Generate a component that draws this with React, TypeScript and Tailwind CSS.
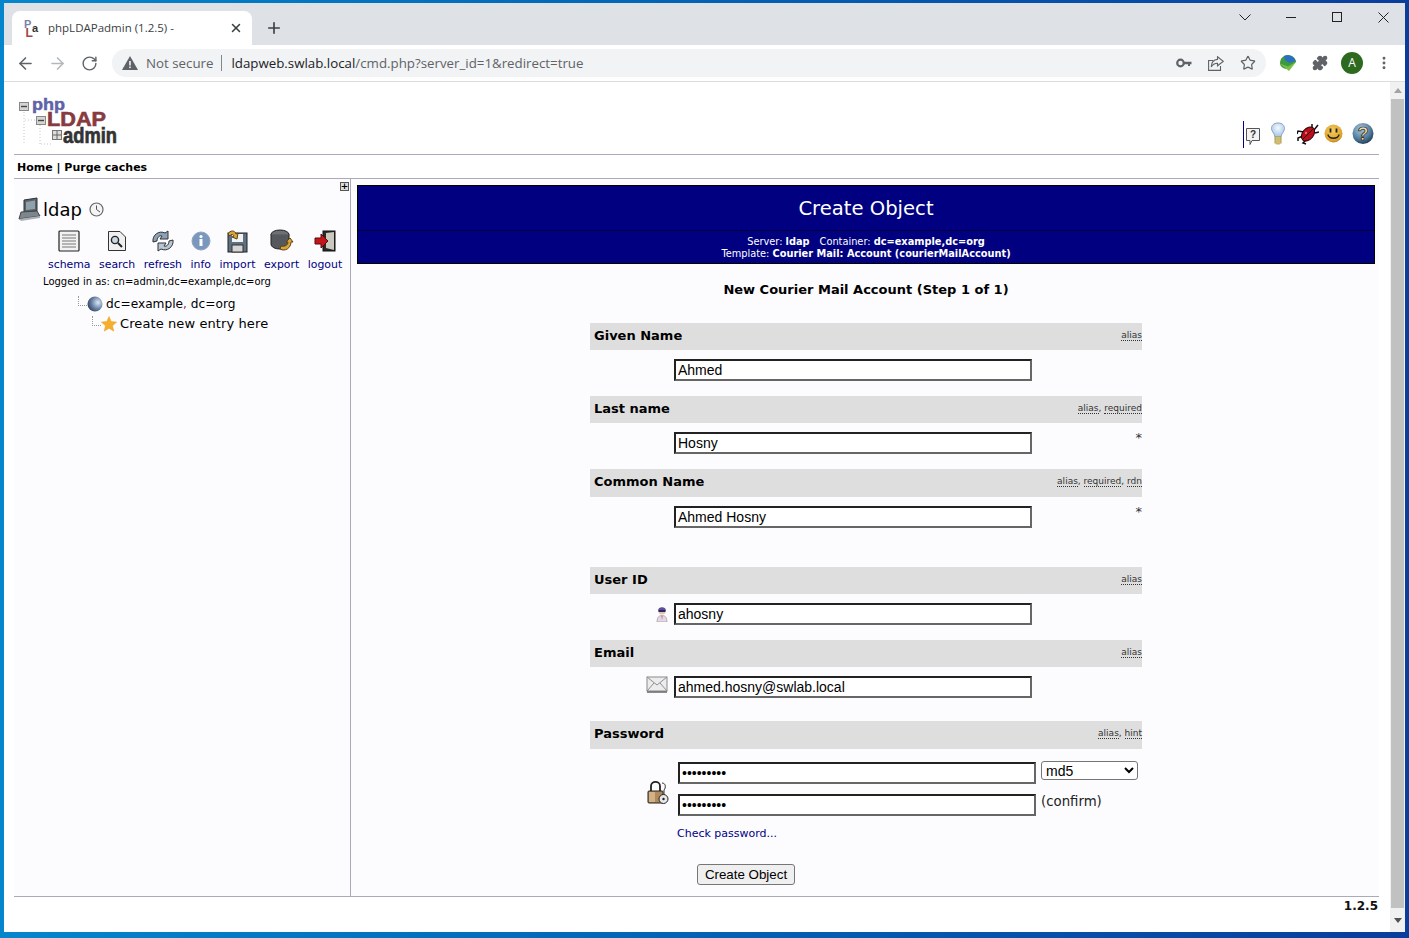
import { ArrowLeft, ArrowRight, MoreVertical, Plus, Puzzle, RotateCw, Star, X } from "lucide-react";
import type { ReactNode } from "react";

const Logo = () => (
  <svg width="104" height="52" viewBox="0 0 104 52" className="block overflow-visible">
    <path d="M7 14V46M23 27V46M8 22H19M24 46H36" stroke="#c4c4c4" strokeDasharray="1 2" fill="none" />
    <rect x="2.5" y="4.5" width="9" height="8" fill="#d4d4d4" stroke="#888" />
    <path d="M4 8.5H10" stroke="#444" strokeWidth="1.4" />
    <text x="15" y="12" fontFamily="Liberation Sans" fontWeight="700" fontSize="17" fill="#5f62a8" stroke="#5f62a8" strokeWidth="0.5" textLength="33" lengthAdjust="spacingAndGlyphs">php</text>
    <rect x="19.5" y="18.5" width="9" height="8" fill="#d4d4d4" stroke="#888" />
    <path d="M21 22.5H27" stroke="#444" strokeWidth="1.4" />
    <text x="30" y="28" fontFamily="Liberation Sans" fontWeight="700" fontSize="20" fill="#873a40" stroke="#873a40" strokeWidth="0.6" textLength="59" lengthAdjust="spacingAndGlyphs">LDAP</text>
    <rect x="35.5" y="32.5" width="9" height="9" fill="#ddd" stroke="#777" />
    <path d="M40 33V41M36 37H44" stroke="#666" />
    <text x="46" y="45" fontFamily="Liberation Sans" fontWeight="700" fontSize="22" fill="#333" stroke="#333" strokeWidth="0.7" textLength="54" lengthAdjust="spacingAndGlyphs">admin</text>
  </svg>
);

const Favicon = () => (
  <svg width="16" height="18" viewBox="0 0 16 18" className="overflow-visible">
    <text x="0" y="9" fontFamily="Liberation Sans" fontWeight="700" fontSize="11" fill="#7d7fae">P</text>
    <text x="1.5" y="17.5" fontFamily="Liberation Sans" fontWeight="700" fontSize="12" fill="#9c4a4a">L</text>
    <text x="8" y="13" fontFamily="Liberation Sans" fontWeight="700" fontSize="11" fill="#333">a</text>
  </svg>
);

const HelpBubble = () => (
  <svg width="16" height="20" viewBox="0 0 16 20">
    <path d="M1.5 1.5H14.5V13.5H7L5 17.5V13.5H1.5Z" fill="#f4f4f4" stroke="#555" />
    <text x="8" y="11" textAnchor="middle" fontFamily="Liberation Sans" fontWeight="700" fontSize="10" fill="#333">?</text>
  </svg>
);

const Bulb = () => (
  <svg width="16" height="23" viewBox="0 0 16 23">
    <defs>
      <radialGradient id="bulb" cx="0.5" cy="0.35" r="0.7">
        <stop offset="0" stopColor="#f4f9ff" />
        <stop offset="1" stopColor="#9dc0e4" />
      </radialGradient>
    </defs>
    <path d="M8 1C3.5 1 1.5 3.5 1.5 6.5C1.5 9.5 4.5 11 5 15H11C11.5 11 14.5 9.5 14.5 6.5C14.5 3.5 12.5 1 8 1Z" fill="url(#bulb)" stroke="#8aa4c4" />
    <rect x="5" y="15" width="6" height="6" fill="#efe09a" stroke="#b09a4c" />
    <path d="M5 17H11M5 19H11" stroke="#b09a4c" />
    <path d="M6 21H10V22.5H6Z" fill="#c8b568" />
  </svg>
);

const Bug = () => (
  <svg width="22" height="22" viewBox="0 0 22 22">
    <path d="M7 9L1 8L0 11M6 13L1 15L1 18M9 17L6 20L9 21M15 5L15 1M17 7L21 2M18 10L22 9" stroke="#111" strokeWidth="1.5" fill="none" />
    <ellipse cx="11" cy="11" rx="5.5" ry="8" transform="rotate(40 11 11)" fill="#b80f1c" stroke="#300" />
    <path d="M6 16L16 6" stroke="#300" />
    <circle cx="9" cy="10" r="1.2" fill="#e66" />
  </svg>
);

const Smile = () => (
  <svg width="19" height="20" viewBox="0 0 19 20">
    <defs>
      <radialGradient id="smile" cx="0.45" cy="0.35" r="0.75">
        <stop offset="0" stopColor="#f4cc5c" />
        <stop offset="0.75" stopColor="#dca02a" />
        <stop offset="1" stopColor="#7d5a14" />
      </radialGradient>
    </defs>
    <circle cx="9.5" cy="9.5" r="9" fill="url(#smile)" />
    <path d="M6.5 4.5V8.5M12.5 4.5V8.5" stroke="#222" strokeWidth="1.8" />
    <path d="M3.8 10.5C5.5 15.5 13.5 15.5 15.2 10.5" stroke="#222" strokeWidth="1.3" fill="none" />
  </svg>
);

const HelpCircle = () => (
  <svg width="22" height="23" viewBox="0 0 22 23">
    <defs>
      <radialGradient id="help" cx="0.4" cy="0.3" r="0.8">
        <stop offset="0" stopColor="#a9c8e0" />
        <stop offset="0.6" stopColor="#4f7a9c" />
        <stop offset="1" stopColor="#14283c" />
      </radialGradient>
    </defs>
    <circle cx="11" cy="11.5" r="10.5" fill="url(#help)" />
    <text x="11" y="18" textAnchor="middle" fontFamily="Liberation Sans" fontWeight="700" fontSize="18" fill="#f6e6a8" stroke="#222" strokeWidth="0.7">?</text>
  </svg>
);

const ServerIcon = () => (
  <svg width="24" height="24" viewBox="0 0 24 24">
    <path d="M6 3L19 1V14L6 15Z" fill="#59636b" stroke="#333" />
    <path d="M8 5L17 3.5V12L8 13Z" fill="#8fa1ad" />
    <path d="M3 15L19 14L22 19L1 22Z" fill="#7c868d" stroke="#444" />
    <path d="M1 22L22 19V21L3 24Z" fill="#aab2b8" />
  </svg>
);

const Clock = () => (
  <svg width="15" height="15" viewBox="0 0 15 15">
    <circle cx="7.5" cy="7.5" r="6.5" fill="#f4f4f4" stroke="#666" strokeWidth="1.2" />
    <path d="M7.5 3.5V7.5L11 10" stroke="#555" fill="none" />
  </svg>
);

const SchemaIcon = () => (
  <svg width="22" height="22" viewBox="0 0 22 22">
    <rect x="1" y="1" width="20" height="20" rx="1" fill="#f2f2f2" stroke="#222" strokeWidth="1.2" />
    <path d="M4 5H18M4 8H18M4 11H18M4 14H18M4 17H18" stroke="#777" />
  </svg>
);

const SearchIcon = () => (
  <svg width="20" height="22" viewBox="0 0 20 22">
    <path d="M1.5 1.5H13L18.5 7V20.5H1.5Z" fill="#f0f0f0" stroke="#333" />
    <circle cx="8" cy="10" r="3.6" fill="#cdd7e2" stroke="#222" strokeWidth="1.4" />
    <path d="M11 13L15 17" stroke="#222" strokeWidth="2" />
  </svg>
);

const RefreshIcon = () => (
  <svg width="22" height="22" viewBox="0 0 22 22">
    <path d="M1 12C0 5 7 0 13 3L16 1V9H8L10 6C7 5 5 8 5 11Z" fill="#8ba3ba" stroke="#333" />
    <path d="M21 10C22 17 15 22 9 19L6 21V13H14L12 16C15 17 17 14 17 11Z" fill="#b7c6d4" stroke="#333" />
  </svg>
);

const InfoIcon = () => (
  <svg width="20" height="20" viewBox="0 0 20 20">
    <circle cx="10" cy="10" r="9" fill="#7a97bd" stroke="#8fa3bd" />
    <rect x="8.5" y="8" width="3" height="7" fill="#fff" />
    <circle cx="10" cy="5.5" r="1.6" fill="#fff" />
  </svg>
);

const ImportIcon = () => (
  <svg width="22" height="24" viewBox="0 0 22 24">
    <rect x="2" y="4" width="19" height="19" fill="#5d7182" stroke="#222" />
    <rect x="6" y="5" width="11" height="8" fill="#f2f2f2" />
    <rect x="6" y="16" width="11" height="7" fill="#d5d5d5" stroke="#333" />
    <path d="M2 5C4 1 9 1 10 5L12 4L11 10L6 8L8 7C7 5 5 5 4 7Z" fill="#d9a53a" stroke="#5e4210" />
  </svg>
);

const ExportIcon = () => (
  <svg width="24" height="24" viewBox="0 0 24 24">
    <ellipse cx="10" cy="5.5" rx="9" ry="4.5" fill="#6c6f73" stroke="#222" />
    <path d="M1 5.5V15C1 18 5 20 10 20C15 20 19 18 19 15V5.5" fill="#55585c" stroke="#222" />
    <path d="M11 17C15 18 18 16 18 13L16 13L20 9L23 13L21 13C21 19 15 23 10 20Z" fill="#d9a53a" stroke="#5e4210" />
  </svg>
);

const LogoutIcon = () => (
  <svg width="22" height="22" viewBox="0 0 22 22">
    <rect x="9" y="1" width="12" height="20" fill="#2a2a28" stroke="#111" />
    <path d="M12 3L20 2V20L12 18Z" fill="#c9c9bd" />
    <path d="M1 8H7V4L14 11L7 18V14H1Z" fill="#c3161c" stroke="#5a0a0a" />
  </svg>
);

const GlobeIcon = () => (
  <svg width="16" height="16" viewBox="0 0 16 16">
    <defs>
      <radialGradient id="globe" cx="0.7" cy="0.4" r="0.8">
        <stop offset="0" stopColor="#dfe8f2" />
        <stop offset="0.5" stopColor="#6d87aa" />
        <stop offset="1" stopColor="#26344c" />
      </radialGradient>
    </defs>
    <circle cx="8" cy="8" r="7.5" fill="url(#globe)" />
  </svg>
);

const StarIcon = () => (
  <svg width="16" height="16" viewBox="0 0 16 16">
    <path d="M8 0.5L10.2 5.6L15.6 6.1L11.5 9.7L12.8 15.2L8 12.2L3.2 15.2L4.5 9.7L0.4 6.1L5.8 5.6Z" fill="#f6ae2d" stroke="#e8a020" strokeWidth="0.5" />
  </svg>
);

const UserIcon = () => (
  <svg width="12" height="16" viewBox="0 0 12 16">
    <path d="M1 16C1 11 3 9.5 6 9.5C9 9.5 11 11 11 16Z" fill="#e6d6de" stroke="#9a8aa0" strokeWidth="0.6" />
    <path d="M5 10L6 14L7 10Z" fill="#b09ac0" />
    <circle cx="6" cy="5" r="3.6" fill="#e5c4b0" />
    <path d="M2 4.5C2 0 10 0 10 4.5Z" fill="#5a4f9c" />
    <path d="M2.5 4H9.5V6H2.5Z" fill="#2f2760" />
  </svg>
);

const MailIcon = () => (
  <svg width="22" height="17" viewBox="0 0 22 17">
    <rect x="1" y="1" width="20" height="14" fill="#ececec" stroke="#8a8a8a" />
    <path d="M1 1L11 9L21 1M1 15L8 7M21 15L14 7" stroke="#8f8f8f" fill="none" />
    <path d="M1 16H21" stroke="#666" strokeWidth="1.5" />
  </svg>
);

const LockIcon = () => (
  <svg width="22" height="25" viewBox="0 0 22 25">
    <path d="M4 11V6C4 0.5 13 0.5 13 6V11" fill="none" stroke="#222" strokeWidth="1.8" />
    <rect x="1" y="11" width="15" height="12" rx="1" fill="#b08a5a" stroke="#222" />
    <path d="M2 12H8V22H2Z" fill="#d2b184" />
    <circle cx="16.5" cy="19" r="4.5" fill="#e8e8e8" stroke="#222" />
    <circle cx="16.5" cy="19" r="1.2" fill="#222" />
    <path d="M15 3C19 3 19 8 17 10V14.5" stroke="#333" fill="none" />
  </svg>
);

const WarningIcon = () => (
  <svg width="16" height="14" viewBox="0 0 16 14">
    <path d="M8 0L16 14H0Z" fill="#5f6368" />
    <rect x="7.2" y="5" width="1.6" height="4.5" fill="#f1f3f4" />
    <rect x="7.2" y="10.5" width="1.6" height="1.6" fill="#f1f3f4" />
  </svg>
);

const KeyIcon = () => (
  <svg width="16" height="10" viewBox="0 0 16 10">
    <circle cx="4.5" cy="5" r="3.3" fill="none" stroke="#5f6368" strokeWidth="2.2" />
    <path d="M8 3.8H15.5V6.2H14V8H12V6.2H8Z" fill="#5f6368" />
  </svg>
);

const ShareIcon = () => (
  <svg width="16" height="15" viewBox="0 0 16 15" fill="none" stroke="#5f6368" strokeWidth="1.1">
    <path d="M5 4.5H0.6V14.4H12.5V10" />
    <path d="M9.5 0.8L15.2 5.4L9.5 9.8V7.2C6.5 7.2 4.6 8.4 3.2 11C3.4 7 5.6 3.6 9.5 3.4Z" />
  </svg>
);

const ExtensionIcon = () => (
  <svg width="18" height="18" viewBox="0 0 18 18">
    <path d="M1 9C1 4 5 1 9 1C14 1 17 5 17 8L9 15C5 15 1 13 1 9Z" fill="#3f9a3f" />
    <path d="M5 2C9 0 15 2 16.5 7L10 9L6 6Z" fill="#2a6fc4" />
    <path d="M0.5 9.5L9 12.5L17 8L10 17Z" fill="#78c043" />
  </svg>
);

const WindowControls = () => (
  <div className="flex items-center h-[28px] self-start mr-[-1px] text-[#222]">
    <div className="w-[46px] flex justify-center">
      <svg width="12" height="7" viewBox="0 0 12 7" fill="none" stroke="currentColor">
        <path d="M0.5 0.5L6 6L11.5 0.5" />
      </svg>
    </div>
    <div className="w-[46px] flex justify-center">
      <div className="w-[10px] h-px bg-[#222]" />
    </div>
    <div className="w-[46px] flex justify-center">
      <div className="w-[10px] h-[10px] border border-[#222]" />
    </div>
    <div className="w-[46px] flex justify-center">
      <svg width="11" height="11" viewBox="0 0 11 11" fill="none" stroke="currentColor">
        <path d="M0.5 0.5L10.5 10.5M10.5 0.5L0.5 10.5" />
      </svg>
    </div>
  </div>
);

const tabs = [
  { name: "schema", icon: <SchemaIcon /> },
  { name: "search", icon: <SearchIcon /> },
  { name: "refresh", icon: <RefreshIcon /> },
  { name: "info", icon: <InfoIcon /> },
  { name: "import", icon: <ImportIcon /> },
  { name: "export", icon: <ExportIcon /> },
  { name: "logout", icon: <LogoutIcon /> },
];

const TextBox = ({ value, type = "text" }: { value: string; type?: string }) => (
  <input
    type={type}
    defaultValue={value}
    className="w-[358px] h-[22px] px-[2px] bg-white border-2 border-t-[#222] border-l-[#222] border-b-[#666] border-r-[#666] text-[14px] text-black font-['Liberation_Sans',sans-serif] outline-none"
  />
);

const Tags = ({ items }: { items: string[] }) => (
  <span className="text-[9px] text-[#333]">
    {items.map((t, i) => (
      <span key={t}>
        {i > 0 && ", "}
        <span className="border-b border-dotted border-[#333]">{t}</span>
      </span>
    ))}
  </span>
);

const FieldHeader = ({ label, tags, className }: { label: string; tags: string[]; className: string }) => (
  <div className={`flex items-center justify-between h-[27px] pl-1 pb-[2px] bg-[#dedede] ${className}`}>
    <span className="text-[13px] font-bold text-black">{label}</span>
    <Tags items={tags} />
  </div>
);

const Field = ({
  label,
  tags,
  value,
  icon,
  required,
  className = "mt-[15px]",
}: {
  label: string;
  tags: string[];
  value: string;
  icon?: ReactNode;
  required?: boolean;
  className?: string;
}) => (
  <>
    <FieldHeader label={label} tags={tags} className={className} />
    <div className="grid grid-cols-[84px_358px_1fr] mt-[9px] h-[22px]">
      <div className="flex items-center justify-end pr-[6px]">{icon}</div>
      <TextBox value={value} />
      <div className="text-right text-[13px] leading-[11px] text-[#333]">{required && "*"}</div>
    </div>
  </>
);

const BrowserChrome = () => (
  <>
    {/* tab strip */}
    <div className="h-[42px] bg-[#dee1e6] flex items-end pl-2 shrink-0">
      <div className="w-[240px] h-[34px] bg-white rounded-t-lg flex items-center pl-3 pr-[9px]">
        <Favicon />
        <span className="ml-[8px] flex-1 text-[11.5px] text-[#3c4043] font-['Open_Sans',sans-serif]">phpLDAPadmin (1.2.5) -</span>
        <X size={14} strokeWidth={2.6} className="text-[#3c4043]" />
      </div>
      <Plus size={18} strokeWidth={2.2} className="ml-[13px] mb-[8px] text-[#3c4043]" />
      <div className="flex-1" />
      <WindowControls />
    </div>
    {/* toolbar */}
    <div className="h-[37px] bg-white border-b border-[#dadce0] flex items-center shrink-0 text-[#5f6368]">
      <ArrowLeft size={19} strokeWidth={2} className="ml-[12px]" />
      <ArrowRight size={19} strokeWidth={2} className="ml-[13px] text-[#b4b7bb]" />
      <RotateCw size={17} strokeWidth={2} className="ml-[14px]" />
      <div className="ml-[14px] w-[1154px] h-[28px] rounded-full bg-[#f1f3f4] flex items-center pl-[10px] pr-[10px] font-['Open_Sans',sans-serif] text-[13.3px]">
        <WarningIcon />
        <span className="ml-[8px] pt-[2px] text-[#5f6368]">Not secure</span>
        <span className="ml-[8px] w-px h-[16px] bg-[#80868b]" />
        <span className="ml-[9px] pt-[2px] text-[#202124]">ldapweb.swlab.local</span>
        <span className="pt-[2px] text-[#5f6368]">/cmd.php?server_id=1&amp;redirect=true</span>
        <div className="flex-1" />
        <KeyIcon />
        <span className="ml-[16px]">
          <ShareIcon />
        </span>
        <Star size={16} strokeWidth={1.8} className="ml-[16px]" />
      </div>
      <div className="ml-[13px]">
        <ExtensionIcon />
      </div>
      <Puzzle size={16} strokeWidth={2} fill="#5f6368" className="ml-[15px]" />
      <div className="ml-[13px] w-[22px] h-[22px] rounded-full bg-[#2d6a1f] text-white text-[12px] flex items-center justify-center font-['Open_Sans',sans-serif]">
        A
      </div>
      <MoreVertical size={16} strokeWidth={2.4} className="ml-[13px]" />
    </div>
  </>
);

const Sidebar = () => (
  <aside className="w-[337px] shrink-0 border-r border-[#aaaaba] bg-[#fcfcff] relative pt-[18px] pl-1">
    <div className="absolute top-[3px] right-[1px] w-[9px] h-[9px] border border-[#555] bg-[#ddd] flex items-center justify-center text-[9px] leading-none font-bold text-black">
      +
    </div>
    <div className="flex items-center h-[24px]">
      <ServerIcon />
      <span className="ml-[1px] text-[18px] text-black">ldap</span>
      <span className="ml-[7px]">
        <Clock />
      </span>
    </div>
    <div className="flex gap-[8.5px] ml-[30px] mt-[9px]">
      {tabs.map((t) => (
        <div key={t.name} className="flex flex-col items-center">
          <div className="h-[22px] flex items-center">{t.icon}</div>
          <span className="mt-[5px] text-[10.9px] leading-[16px] text-[#000080]">{t.name}</span>
        </div>
      ))}
    </div>
    <div className="ml-[25px] mt-[1px] text-[10px] leading-[16px] text-black">Logged in as: cn=admin,dc=example,dc=org</div>
    <div className="ml-[58px] mt-[4px] flex items-center h-[20px]">
      <span className="w-[9px] h-[10px] border-l border-b border-dotted border-[#999] mb-[6px] ml-[2px]" />
      <GlobeIcon />
      <span className="ml-[3px] text-[12.2px] text-black">
        dc=example<span className="text-[#a33]">,</span> dc=org
      </span>
    </div>
    <div className="ml-[74px] flex items-center h-[20px]">
      <span className="w-[9px] h-[10px] border-l border-b border-dotted border-[#999] mb-[6px]" />
      <StarIcon />
      <span className="ml-[3px] text-[13px] tracking-[0.1px] text-black">Create new entry here</span>
    </div>
  </aside>
);

const CreateForm = () => (
  <main className="flex-1 bg-[#fcfcff] flex flex-col pl-[6px] pr-[4px] pt-[6px]">
    <div className="border border-black bg-[#000080] text-white text-center">
      <div className="h-[45px] flex items-center justify-center border-b border-[#00003c] pt-[2px] text-[19.6px]">Create Object</div>
      <div className="h-[32px] flex flex-col justify-center pt-[2px] text-[9.8px] leading-[12px]">
        <div>
          Server: <b>ldap</b>
          <span className="ml-[10px]">Container: </span>
          <b>dc=example,dc=org</b>
        </div>
        <div>
          Template: <b>Courier Mail: Account (courierMailAccount)</b>
        </div>
      </div>
    </div>
    <div className="mt-[17px] text-center text-[13px] leading-[17px] font-bold text-black">New Courier Mail Account (Step 1 of 1)</div>
    <div className="w-[552px] ml-[233px]">
      <Field label="Given Name" tags={["alias"]} value="Ahmed" className="mt-[25px]" />
      <Field label="Last name" tags={["alias", "required"]} value="Hosny" required />
      <Field label="Common Name" tags={["alias", "required", "rdn"]} value="Ahmed Hosny" required className="mt-[15px] h-[28px]" />
      <Field label="User ID" tags={["alias"]} value="ahosny" icon={<UserIcon />} className="mt-[39px]" />
      <Field label="Email" tags={["alias"]} value="ahmed.hosny@swlab.local" icon={<span className="mb-[8px]"><MailIcon /></span>} />
      <FieldHeader label="Password" tags={["alias", "hint"]} className="mt-[23px] h-[28px]" />
      <div className="mt-[13px] flex">
        <div className="w-[88px] flex items-center justify-end pr-[9px] pt-[6px]">
          <LockIcon />
        </div>
        <div className="flex flex-col gap-[10px]">
          <TextBox value="123456789" type="password" />
          <TextBox value="123456789" type="password" />
        </div>
        <div className="ml-[5px] flex flex-col">
          <select className="w-[97px] h-[19px] mt-[-1px] bg-white border border-[#767676] rounded-[3px] text-[14px] leading-none text-black font-['Liberation_Sans',sans-serif]">
            <option>md5</option>
          </select>
          <span className="mt-[13px] text-[13.3px] leading-[18px] text-[#222]">(confirm)</span>
        </div>
      </div>
      <div className="ml-[87px] mt-[10px] text-[11px] leading-[15px] text-[#000080]">Check password...</div>
      <button className="block ml-[107px] mt-[23px] w-[98px] h-[21px] bg-[#efefef] border border-[#767676] rounded-[3px] text-[13.33px] leading-none text-black font-['Liberation_Sans',sans-serif]">
        Create Object
      </button>
    </div>
  </main>
);

const Scrollbar = () => (
  <div className="w-[15px] bg-[#f1f1f1] flex flex-col items-center shrink-0">
    <div className="h-[17px] flex items-center justify-center">
      <div className="w-0 h-0 border-x-[4px] border-x-transparent border-b-[5px] border-b-[#a3a3a3]" />
    </div>
    <div className="w-[13px] flex-1 bg-[#c1c1c1]" />
    <div className="h-[24px] flex items-center justify-center">
      <div className="w-0 h-0 border-x-[4px] border-x-transparent border-t-[5px] border-t-[#505050]" />
    </div>
  </div>
);

export default function App() {
  return (
    <div className="w-[1409px] h-[938px] overflow-hidden bg-gradient-to-r from-[#0586cc] to-[#0a3d9c] pt-[3px] pl-[4px] pr-[4px] pb-[6px] flex flex-col font-['DejaVu_Sans',sans-serif]">
      <BrowserChrome />
      <div className="flex-1 min-h-0 flex bg-white">
        <div className="flex-1 min-w-0 flex flex-col pl-[10px] pr-[11px]">
          {/* page header */}
          <header className="h-[73px] shrink-0 flex items-end justify-between border-b border-[#aaaaba]">
            <div className="ml-[3px] mb-[4px]">
              <Logo />
            </div>
            <div className="flex h-[27px] mb-[6px] pr-[5px]">
              <div className="w-px h-[27px] bg-[#000080]" />
              <div className="ml-px mt-[6px]">
                <HelpBubble />
              </div>
              <div className="ml-[9px] mt-[1px]">
                <Bulb />
              </div>
              <div className="ml-[11px] mt-[2px]">
                <Bug />
              </div>
              <div className="ml-[5px] mt-[3px]">
                <Smile />
              </div>
              <div className="ml-[9px] mt-[1px]">
                <HelpCircle />
              </div>
            </div>
          </header>
          <nav className="h-[24px] shrink-0 flex items-center pl-[3px] pt-[4px] text-[11px] font-bold text-black border-b border-[#aaaaba]">
            Home | Purge caches
          </nav>
          <div className="flex-1 min-h-0 flex">
            <Sidebar />
            <CreateForm />
          </div>
          <footer className="h-[36px] shrink-0 border-t border-[#aaaaba] text-right pr-px pt-[1px] text-[12px] leading-[16px] font-bold text-[#111]">
            1.2.5
          </footer>
        </div>
        <Scrollbar />
      </div>
    </div>
  );
}
